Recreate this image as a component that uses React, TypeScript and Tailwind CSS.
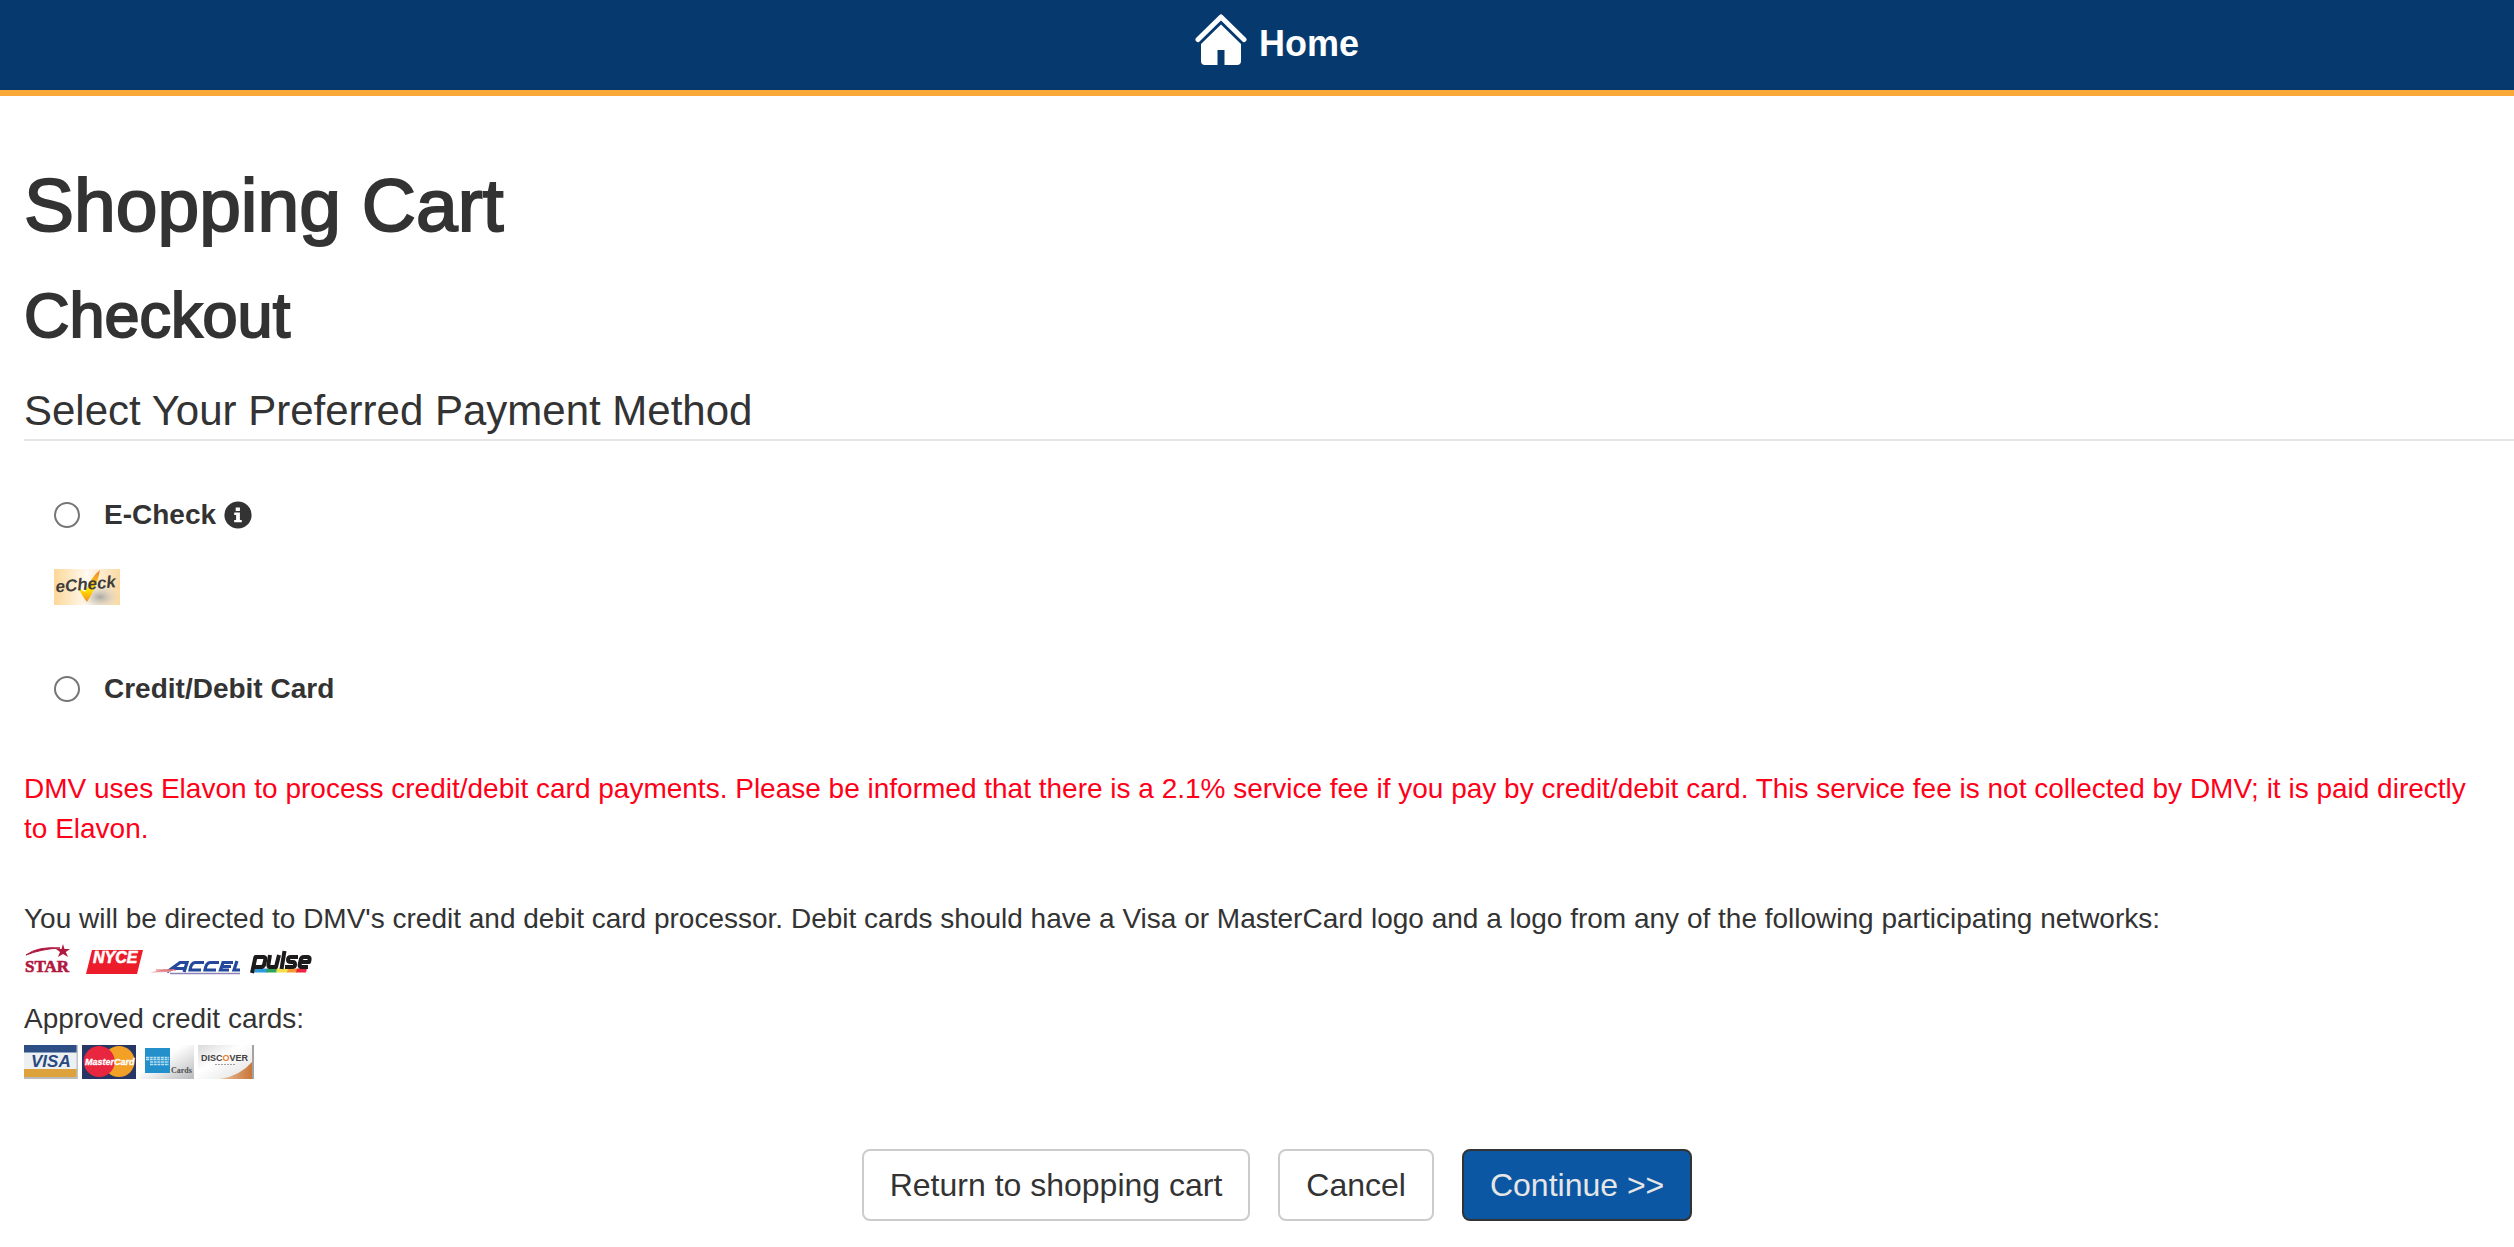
import React from "react";

function HomeIcon() {
  return (
    <svg viewBox="0 0 52 52" className="h-[52px] w-[52px]" aria-hidden="true">
      <path d="M3 25.500 L26 3 L49 25.500" fill="none" stroke="#fff" strokeWidth="5" strokeLinecap="round" strokeLinejoin="round" />
      <path d="M26 10.500 L46 30 V47 Q46 51 42 51 H29.500 V36 H22.500 V51 H10 Q6 51 6 47 V30 Z" fill="#fff" />
    </svg>
  );
}

function InfoIcon() {
  return (
    <svg viewBox="0 0 28 28" className="h-7 w-7" role="img" aria-label="Information">
      <circle cx="14" cy="14" r="13.6" fill="#333" />
      <path d="M11.700 6.500h4.200v3.600h-4.200z M10.200 11.600h5.700v7.300h1.900v2.400h-7.600v-2.400h1.900v-4.900h-1.900z" fill="#fff" />
    </svg>
  );
}

function ECheckLogo() {
  return (
    <svg viewBox="0 0 66 36" className="h-9 w-[66px]" role="img" aria-label="eCheck">
      <defs>
        <linearGradient id="ec-bg" x1="0" y1="0" x2="1" y2="0">
          <stop offset="0" stopColor="#fcd798" />
          <stop offset="0.5" stopColor="#fffaf0" />
          <stop offset="1" stopColor="#fbd9a2" />
        </linearGradient>
        <radialGradient id="ec-shade">
          <stop offset="0" stopColor="#aaa7a2" />
          <stop offset="1" stopColor="#ddd6c8" stopOpacity="0" />
        </radialGradient>
        <linearGradient id="ec-tick" x1="0" y1="0" x2="0" y2="1">
          <stop offset="0" stopColor="#ee7b30" />
          <stop offset="0.6" stopColor="#ffe800" />
          <stop offset="1" stopColor="#f58a1c" />
        </linearGradient>
      </defs>
      <rect width="66" height="36" fill="url(#ec-bg)" />
      <ellipse cx="46" cy="28" rx="20" ry="13" fill="url(#ec-shade)" />
      <path d="M24 19 L31 23 Q38 7 46 1 Q43 18 33 33 Q29 28 24 19Z" fill="url(#ec-tick)" />
      <text x="2" y="23.500" transform="rotate(-5 2 23.5)" fontFamily="Liberation Sans, sans-serif" fontSize="17" fontWeight="700" fontStyle="italic" fill="#3d3d3d">
        eCheck
      </text>
    </svg>
  );
}

function StarLogo() {
  return (
    <svg viewBox="0 0 48 32" className="h-8 w-12" role="img" aria-label="Star">
      <path d="M2 12 Q14 3 36 5 Q17 6 2 12Z" fill="#b01840" stroke="#b01840" strokeWidth="1" />
      <path d="M39 1 L40.500 6 L46 6 L41.800 9 L44 14 L39 11 L34 14 L36 9 L32 6 L37.500 6Z" fill="#b01840" />
      <text x="1" y="29" fontFamily="Liberation Serif, serif" fontSize="17" fontWeight="700" fill="#b01840" stroke="#b01840" strokeWidth="0.6">STAR</text>
    </svg>
  );
}

function NyceLogo() {
  return (
    <svg viewBox="0 0 58 32" className="h-8 w-[58px]" role="img" aria-label="NYCE">
      <path d="M6 7 H57 L51 31 H0Z" fill="#ec1c2b" />
      <text x="7" y="20" fontFamily="Liberation Sans, sans-serif" fontSize="16" fontWeight="700" fontStyle="italic" fill="#fff" stroke="#fff" strokeWidth="0.6">NYCE</text>
    </svg>
  );
}

function AccelLogo() {
  return (
    <svg viewBox="0 0 92 32" className="h-8 w-[92px]" role="img" aria-label="Accel">
      <g fill="none" stroke="#24489b" strokeWidth="3.200">
        <path d="M17 29 L30 19.500 H37 L34 29 M24 25.500 H35" />
        <path d="M54 19.500 H45 Q41 20 40 27 H51" />
        <path d="M69 19.500 H60 Q56 20 55 27 H66" />
        <path d="M83 19.500 H73 L70.500 27 H79 M72 23.500 H81" />
        <path d="M87 18 L84 27 H90" />
      </g>
      <path d="M0 29.500 L14 26.500 H24 L20 29Z" fill="#e69a9f" />
      <path d="M6 27 H26" stroke="#e05a68" strokeWidth="1" />
      <path d="M20 30.500 H90" stroke="#8b82b5" strokeWidth="1.500" />
    </svg>
  );
}

function PulseLogo() {
  return (
    <svg viewBox="0 0 64 32" className="h-8 w-16" role="img" aria-label="Pulse">
      <path d="M5 25.500h12v4H4z" fill="#2b9be0" />
      <path d="M17 25.500h10v4H16z" fill="#2aa45d" />
      <path d="M27 25.500h11v4H26z" fill="#f2df4d" />
      <path d="M38 25.500h9v4H37z" fill="#f59a32" />
      <path d="M47 25.500h10l-1 4H46z" fill="#ec2440" />
      <g fill="none" stroke="#1d1a1c" strokeWidth="4" strokeLinejoin="round">
        <path d="M2 30 L5.500 14 H14 Q16 14 15 18 L14 22 Q13 24 11 24 H4" />
        <path d="M20 12 L18.500 21 Q18 24 20 24 H26 L29 12" />
        <path d="M34.500 8 L31.500 26" />
        <path d="M48 14 H41 Q38 14 38 17 Q38 19 41 19 H43 Q45 19 45 21.500 Q45 24 42 24 H35" />
        <path d="M58 24 H51 Q49 24 50 20 L51 16 Q51.500 14 54 14 H58 Q60 14 59.500 17 L59 19 H50" />
      </g>
    </svg>
  );
}

function VisaLogo() {
  return (
    <svg viewBox="0 0 54 34" className="h-[34px] w-[54px]" role="img" aria-label="Visa">
      <rect width="54" height="34" fill="#edf0f3" />
      <rect width="53" height="7.500" fill="#2d4f85" />
      <rect y="24" width="53" height="8" fill="#dea23c" />
      <rect y="32" width="54" height="2" fill="#b9babb" />
      <rect x="52.500" width="1.500" height="34" fill="#bfc4ca" />
      <text x="7" y="22" fontFamily="Liberation Sans, sans-serif" fontSize="17" fontWeight="700" fontStyle="italic" fill="#294a80">VISA</text>
    </svg>
  );
}

function MasterCardLogo() {
  return (
    <svg viewBox="0 0 54 34" className="h-[34px] w-[54px]" role="img" aria-label="MasterCard">
      <rect width="54" height="34" fill="#273664" />
      <circle cx="37" cy="16.500" r="15.500" fill="#f2a126" />
      <path d="M27 4.500 A15.500 15.500 0 1 0 27 28.500 A15.500 15.500 0 0 0 27 4.500" fill="#e8263f" />
      <text x="3" y="20" fontFamily="Liberation Sans, sans-serif" fontSize="9" fontWeight="700" fontStyle="italic" fill="#fff" stroke="#fff" strokeWidth="0.3">MasterCard</text>
    </svg>
  );
}

function AmexLogo() {
  return (
    <svg viewBox="0 0 54 34" className="h-[34px] w-[54px]" role="img" aria-label="American Express Cards">
      <defs>
        <linearGradient id="ax-bg" x1="0" y1="0" x2="1" y2="1">
          <stop offset="0.400" stopColor="#fff" />
          <stop offset="1" stopColor="#b9babb" />
        </linearGradient>
      </defs>
      <rect width="54" height="34" fill="url(#ax-bg)" />
      <rect x="5" y="3" width="25" height="25" fill="#2390cb" />
      <path d="M6 12.500h23M6 14.500h23M10 17h19M10 19.500h19" stroke="#b8e0f2" strokeWidth="1.300" strokeDasharray="3 0.700" />
      <text x="31" y="28" fontFamily="Liberation Serif, serif" fontSize="8" fontWeight="700" fill="#4f4f4f">Cards</text>
    </svg>
  );
}

function DiscoverLogo() {
  return (
    <svg viewBox="0 0 56 34" className="h-[34px] w-14" role="img" aria-label="Discover Network">
      <defs>
        <linearGradient id="dc-bg" x1="0" y1="0" x2="1" y2="1">
          <stop offset="0" stopColor="#d9dada" />
          <stop offset="0.400" stopColor="#fff" />
          <stop offset="1" stopColor="#dedede" />
        </linearGradient>
        <linearGradient id="dc-arc" x1="0" y1="0" x2="1" y2="0">
          <stop offset="0" stopColor="#e8c09c" />
          <stop offset="1" stopColor="#c9763a" />
        </linearGradient>
      </defs>
      <rect width="56" height="34" fill="url(#dc-bg)" />
      <path d="M22 34 Q42 31 54 17 V34Z" fill="url(#dc-arc)" />
      <rect x="54" width="2" height="34" fill="#a5a19e" />
      <text x="3" y="16" fontFamily="Liberation Sans, sans-serif" fontSize="9" fontWeight="700" fill="#45413f">
        DISC<tspan fill="#ee7c2b">O</tspan>VER
      </text>
      <path d="M17 19.500h21" stroke="#a09d9b" strokeWidth="1.200" strokeDasharray="2 1" />
    </svg>
  );
}

const radio =
  "h-[26px] w-[26px] shrink-0 appearance-none rounded-full border-2 border-[#767676] bg-white checked:border-[7px] checked:border-[#0b57a4]";
const button = "h-[72px] rounded-lg border-2 px-[26px] text-[32px] leading-[44px]";

export default function App() {
  return (
    <div className="bg-white font-['Liberation_Sans',Arial,sans-serif] text-[28px] leading-10 text-[#333]">
      <header className="border-b-[6px] border-[#faa837] bg-[#06396d]">
        <nav className="flex h-[90px] items-start justify-center pt-3.5 pl-10">
          <a href="#home" className="flex items-center gap-3 text-4xl font-bold text-white">
            <HomeIcon />
            <span className="pt-2">Home</span>
          </a>
        </nav>
      </header>

      <main className="pt-[69px] pl-6">
        <h1 className="text-[75px] leading-20 font-medium [-webkit-text-stroke:2px_#333]">Shopping Cart</h1>
        <h2 className="mt-[34px] text-[63px] leading-[72px] font-medium [-webkit-text-stroke:2px_#333]">Checkout</h2>

        <fieldset className="mt-9">
          <legend className="w-full border-b-2 border-[#e5e5e5] pb-1 text-[42px] leading-[48px]">
            Select Your Preferred Payment Method
          </legend>
          <div className="mt-[54px] flex items-center pl-[30px] font-bold">
            <input type="radio" name="payment" id="echeck" className={radio} />
            <label htmlFor="echeck" className="ml-6">E-Check</label>
            <span className="ml-2">
              <InfoIcon />
            </span>
          </div>
          <div className="mt-[34px] pl-[30px]">
            <ECheckLogo />
          </div>
          <div className="mt-16 flex items-center pl-[30px] font-bold">
            <input type="radio" name="payment" id="card" className={radio} />
            <label htmlFor="card" className="ml-6">Credit/Debit Card</label>
          </div>
        </fieldset>

        <p className="mt-[60px] pr-8 text-[#ff0019]">
          DMV uses Elavon to process credit/debit card payments. Please be informed that there is a 2.1% service fee if
          you pay by credit/debit card. This service fee is not collected by DMV; it is paid directly to Elavon.
        </p>

        <p className="mt-[50px]">
          You will be directed to DMV's credit and debit card processor. Debit cards should have a Visa or MasterCard
          logo and a logo from any of the following participating networks:
        </p>
        <div className="mt-1 flex items-center">
          <StarLogo />
          <span className="ml-3.5"><NyceLogo /></span>
          <span className="ml-1.5"><AccelLogo /></span>
          <span className="ml-2"><PulseLogo /></span>
        </div>
        <p className="mt-6">Approved credit cards:</p>
        <div className="mt-1.5 flex items-center gap-1">
          <VisaLogo />
          <MasterCardLogo />
          <AmexLogo />
          <DiscoverLogo />
        </div>

        <div className="mt-[70px] flex justify-center gap-7 pb-6 pl-4">
          <button type="button" className={`${button} border-[#ccc] bg-white`}>Return to shopping cart</button>
          <button type="button" className={`${button} border-[#ccc] bg-white`}>Cancel</button>
          <button type="button" className={`${button} border-[#333] bg-[#0b57a4] text-[#e6e6e6]`}>Continue &gt;&gt;</button>
        </div>
      </main>
    </div>
  );
}
